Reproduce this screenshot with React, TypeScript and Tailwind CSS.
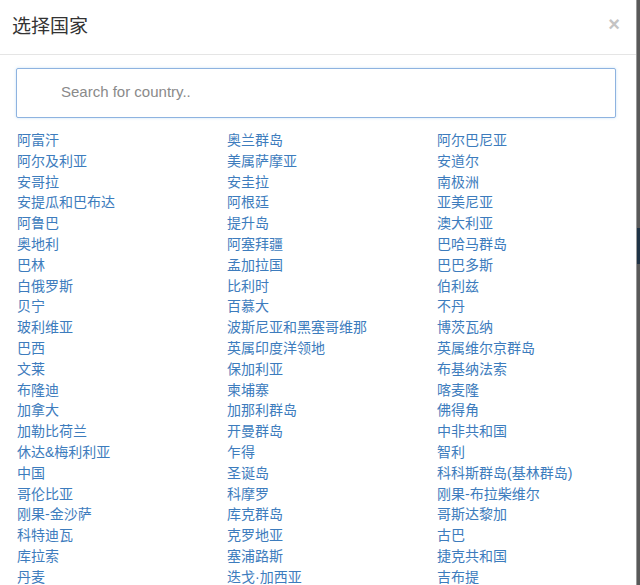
import React from 'react'

const countries = [
  '阿富汗', '奥兰群岛', '阿尔巴尼亚',
  '阿尔及利亚', '美属萨摩亚', '安道尔',
  '安哥拉', '安圭拉', '南极洲',
  '安提瓜和巴布达', '阿根廷', '亚美尼亚',
  '阿鲁巴', '提升岛', '澳大利亚',
  '奥地利', '阿塞拜疆', '巴哈马群岛',
  '巴林', '孟加拉国', '巴巴多斯',
  '白俄罗斯', '比利时', '伯利兹',
  '贝宁', '百慕大', '不丹',
  '玻利维亚', '波斯尼亚和黑塞哥维那', '博茨瓦纳',
  '巴西', '英属印度洋领地', '英属维尔京群岛',
  '文莱', '保加利亚', '布基纳法索',
  '布隆迪', '柬埔寨', '喀麦隆',
  '加拿大', '加那利群岛', '佛得角',
  '加勒比荷兰', '开曼群岛', '中非共和国',
  '休达&梅利利亚', '乍得', '智利',
  '中国', '圣诞岛', '科科斯群岛(基林群岛)',
  '哥伦比亚', '科摩罗', '刚果-布拉柴维尔',
  '刚果-金沙萨', '库克群岛', '哥斯达黎加',
  '科特迪瓦', '克罗地亚', '古巴',
  '库拉索', '塞浦路斯', '捷克共和国',
  '丹麦', '迭戈·加西亚', '吉布提'
]

export default function App() {
  return (
    <div className="flex h-[585px] w-[640px] overflow-hidden bg-white font-['Liberation_Sans','Noto_Sans_CJK_SC',sans-serif]">
      {/* Modal */}
      <div className="flex min-w-0 flex-1 flex-col">
        <div className="flex h-[55px] shrink-0 items-start justify-between border-b border-[#e5e5e5] pl-[12px] pr-[16px] pt-[14px]">
          <h4 className="text-[19px] leading-[22px] text-[#333] font-['Noto_Sans_CJK_SC',sans-serif]">选择国家</h4>
          <button className="text-[20px] font-bold leading-none text-[#c4c4c4]" aria-label="Close">
            ×
          </button>
        </div>

        <div className="px-[16px] pt-[13px]">
          <input
            type="text"
            placeholder="Search for country.."
            className="h-[50px] w-[600px] rounded-[2px] border border-[#8eb3e0] bg-white pb-[3px] pl-[44px] text-[15px] text-[#555] shadow-[0_0_3px_rgba(102,175,233,0.35)] outline-none placeholder:text-[#8a8a8a]"
          />
        </div>

        <div className="grid grid-cols-[210px_210px_1fr] pl-[17px] pt-[12px]">
          {countries.map((name, i) => (
            <a
              key={i}
              href="#"
              className="whitespace-nowrap text-[14px] leading-[20.8px] text-[#3d7cbd]"
            >
              {name}
            </a>
          ))}
        </div>
      </div>

      {/* Backdrop edge */}
      <div className="flex w-[4px] shrink-0 border-l border-[#9a9a9a]">
        <div className="flex flex-1 flex-col bg-[#595959]">
          <div className="h-[228px]" />
          <div className="h-[36px] bg-[#1f3346]" />
        </div>
      </div>
    </div>
  )
}
